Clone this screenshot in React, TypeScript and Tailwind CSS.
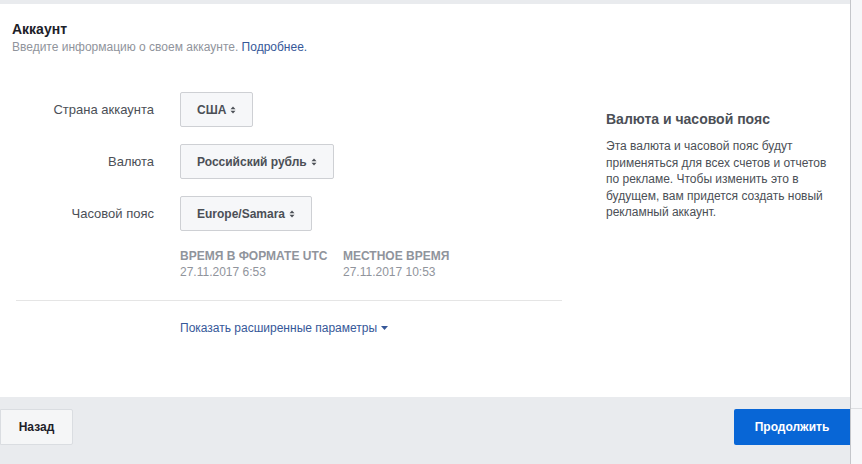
import React from 'react';

const font = { fontFamily: '"Liberation Sans", Arial, Helvetica, sans-serif' };

function Arrows() {
  return (
    <svg width="6" height="8" viewBox="0 0 6 8" className="ml-[4px] inline-block">
      <path d="M3 0.5 L5.5 3.2 H0.5 Z" fill="#4b4f56" />
      <path d="M3 7.5 L5.5 4.8 H0.5 Z" fill="#4b4f56" />
    </svg>
  );
}

function SelectRow({ label, value }: { label: string; value: string }) {
  return (
    <div className="flex items-center h-[35px]">
      <div className="w-[138px] text-right text-[13px] text-[#4b4f56]">{label}</div>
      <button className="ml-[26px] h-[35px] px-[16px] flex items-center bg-[#f6f7f9] border border-[#ced0d4] rounded-[2px] text-[12px] font-bold text-[#4b4f56]">
        {value}
        <Arrows />
      </button>
    </div>
  );
}

export default function App() {
  return (
    <div className="w-[862px] h-[464px] flex bg-[#f6f7f9] overflow-hidden" style={font}>
      <div className="w-[851px] flex flex-col border-r border-[#c4c6ca]">
        <div className="h-[4px] bg-[#e9ebee]" />
        <div className="flex-1 bg-white px-[12px] pt-[16px]">
          <div className="text-[14px] leading-[18px] font-bold text-[#1d2129]">Аккаунт</div>
          <div className="text-[12px] leading-[16px] text-[#90949c] mt-[1px]">
            Введите информацию о своем аккаунте. <span className="text-[#365899]">Подробнее.</span>
          </div>

          <div className="flex">
            <div className="w-[546px] ml-[4px] pt-[37px]">
              <div className="flex flex-col gap-[17px]">
                <SelectRow label="Страна аккаунта" value="США" />
                <SelectRow label="Валюта" value="Российский рубль" />
                <SelectRow label="Часовой пояс" value="Europe/Samara" />
              </div>

              <div className="flex ml-[164px] mt-[17px] text-[12px] leading-[16px] text-[#90949c]">
                <div className="w-[163px]">
                  <div className="font-bold">ВРЕМЯ В ФОРМАТЕ UTC</div>
                  <div>27.11.2017 6:53</div>
                </div>
                <div>
                  <div className="font-bold">МЕСТНОЕ ВРЕМЯ</div>
                  <div>27.11.2017 10:53</div>
                </div>
              </div>

              <div className="h-px bg-[#e5e5e5] mt-[20px]" />

              <div className="ml-[164px] mt-[19px] text-[12px] leading-[16px] text-[#365899] flex items-center">
                Показать расширенные параметры
                <svg width="7" height="4" viewBox="0 0 7 4" className="ml-[4px]">
                  <path d="M0 0 H7 L3.5 4 Z" fill="#365899" />
                </svg>
              </div>
            </div>

            <div className="ml-[44px] w-[228px] pt-[55px]">
              <div className="text-[14px] leading-[18px] font-bold text-[#4b4f56]">Валюта и часовой пояс</div>
              <div className="mt-[10px] text-[12px] leading-[16.5px] text-[#4b4f56]">
                Эта валюта и часовой пояс будут применяться для всех счетов и отчетов по рекламе. Чтобы изменить это в будущем, вам придется создать новый рекламный аккаунт.
              </div>
            </div>
          </div>
        </div>

        <div className="h-[67px] bg-[#e9ebee] flex justify-between items-start pt-[12px]">
          <button className="h-[36px] w-[73px] bg-[#f5f6f7] border border-[#dadde1] rounded-r-[2px] text-[12px] font-bold text-[#1d2129]">
            Назад
          </button>
          <button className="h-[36px] w-[116px] bg-[#0866d6] rounded-l-[2px] text-[12px] font-bold text-white">
            Продолжить
          </button>
        </div>
      </div>
      <div className="flex-1 flex flex-col">
        <div className="h-[409px] border-b border-[#dddfe2]" />
      </div>
    </div>
  );
}
